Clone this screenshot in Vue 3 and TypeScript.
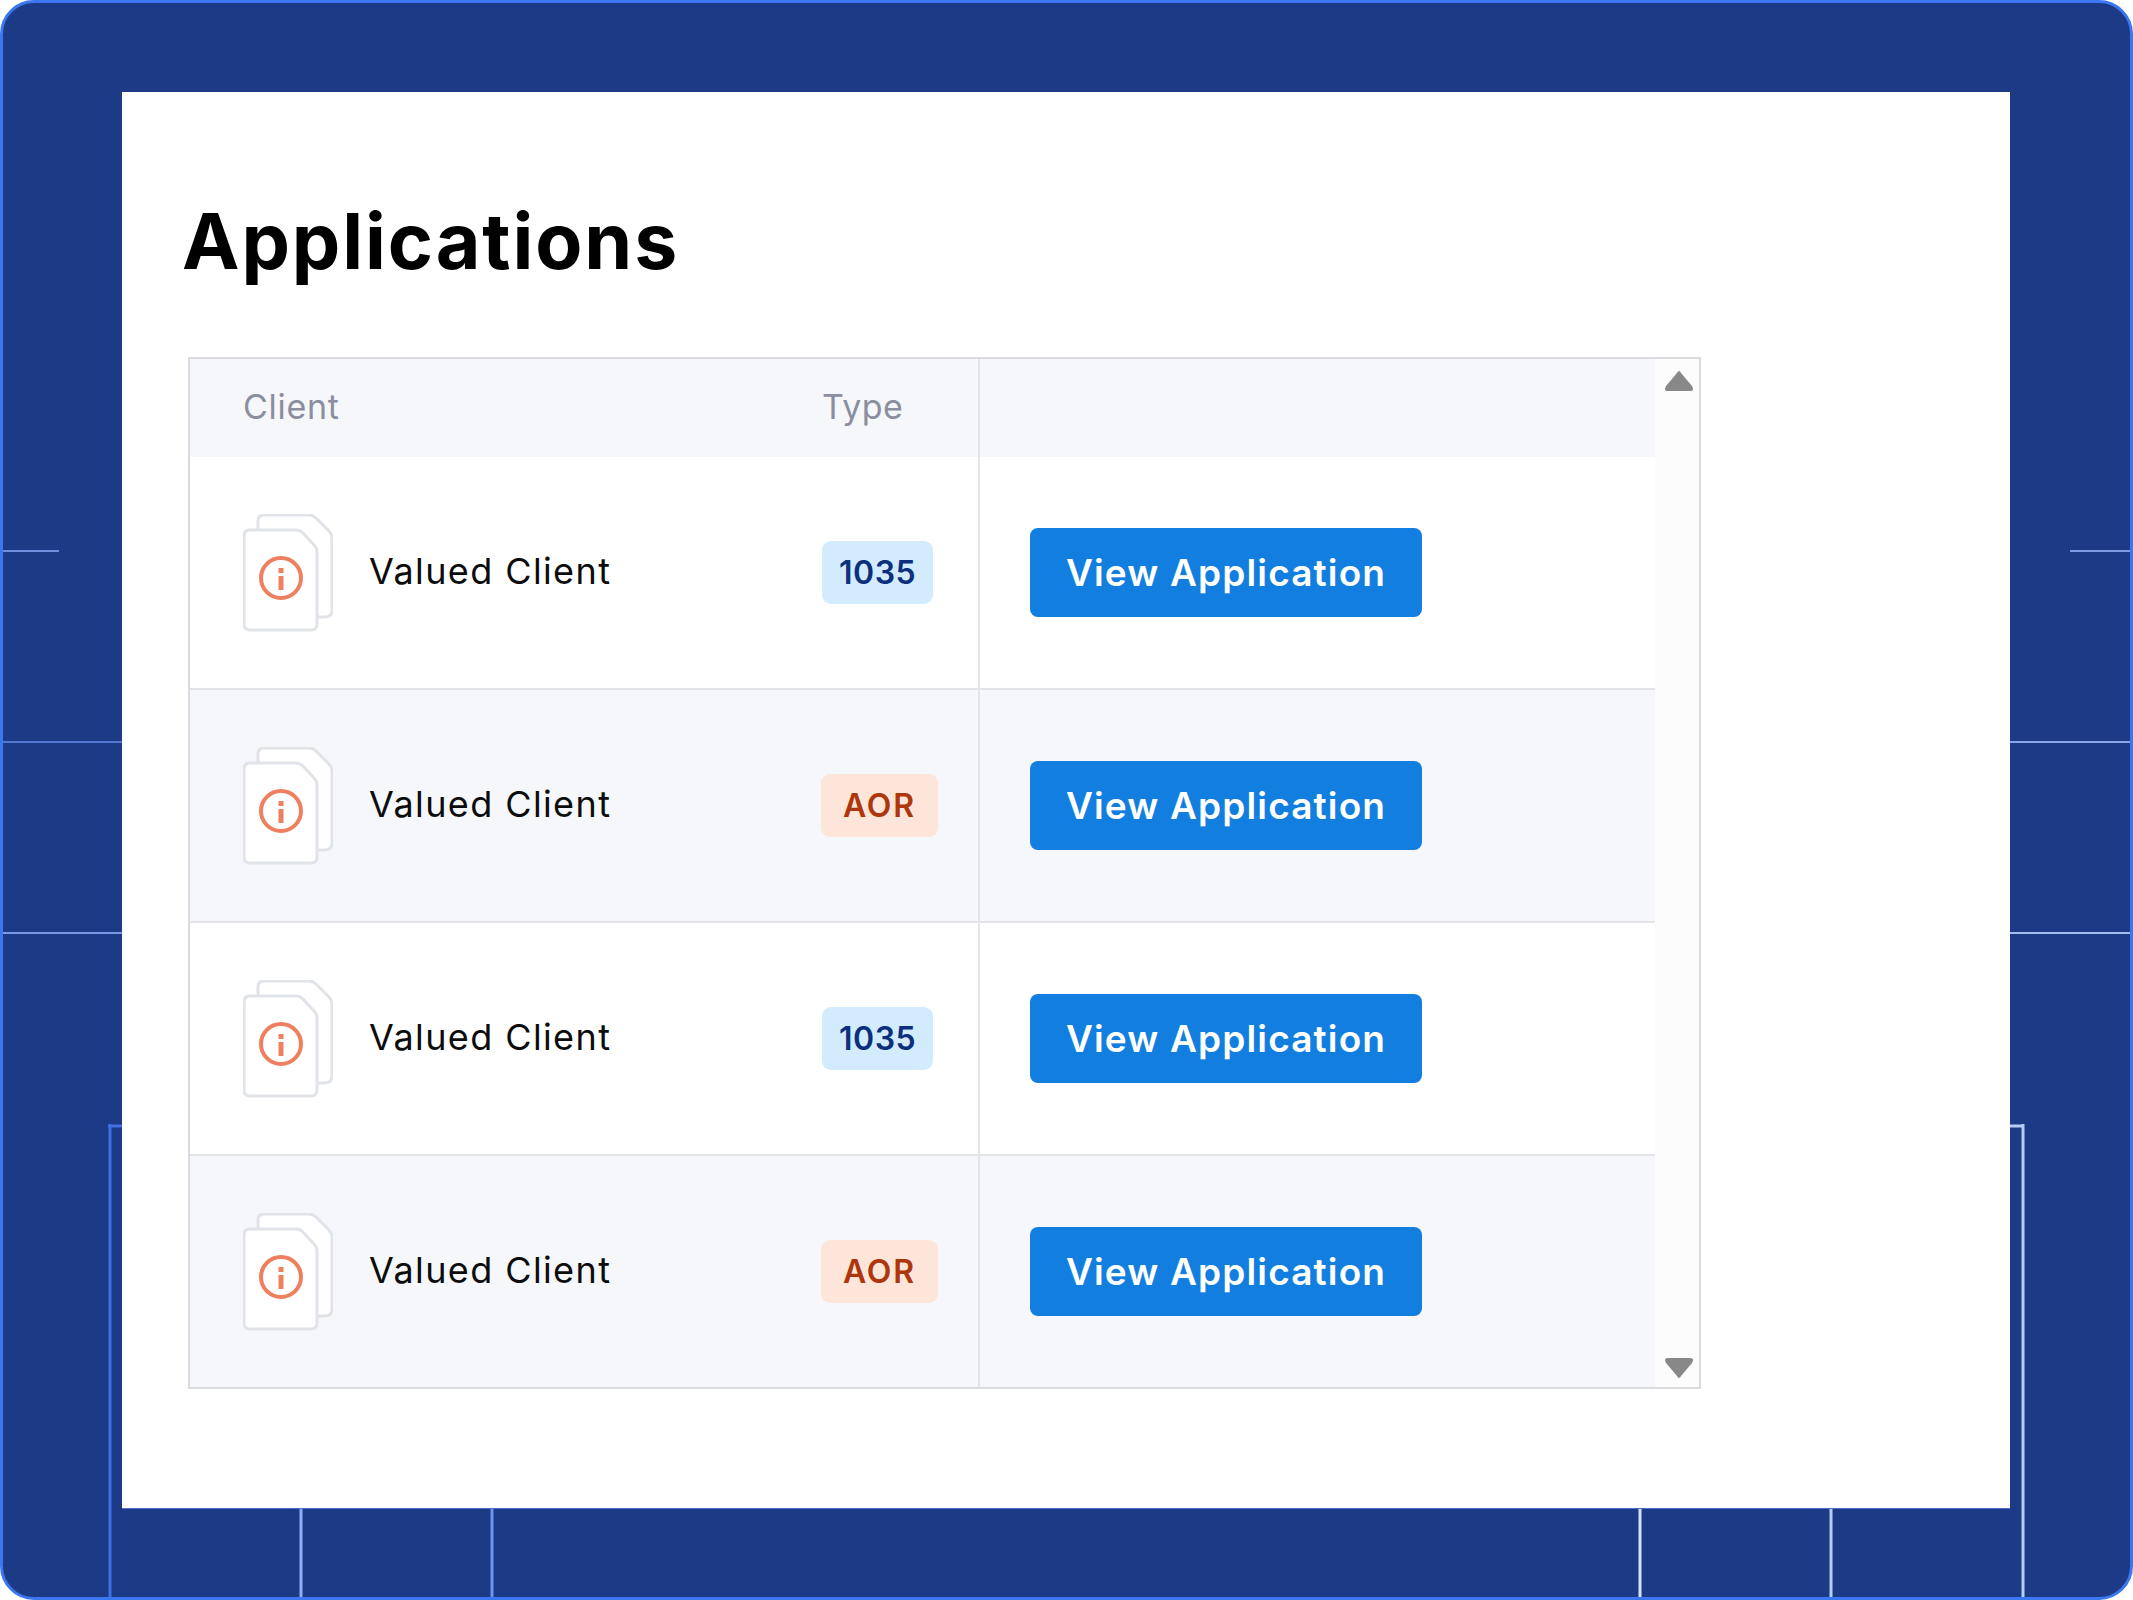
<script setup lang="ts">
interface Row { type: string; kind: string }
const rows: Row[] = [
  { type: '1035', kind: 'blue' },
  { type: 'AOR', kind: 'orange' },
  { type: '1035', kind: 'blue' },
  { type: 'AOR', kind: 'orange' },
]
interface Seg { x1: number; y1: number; x2: number; y2: number; c: string; w: number }
const segs: Seg[] = [
  { x1: 0, y1: 551, x2: 59, y2: 551, c: '#6f8ede', w: 2 },
  { x1: 2070, y1: 551, x2: 2133, y2: 551, c: '#7e9be3', w: 2 },
  { x1: 0, y1: 742, x2: 122, y2: 742, c: '#5477d2', w: 2 },
  { x1: 2010, y1: 742, x2: 2133, y2: 742, c: '#8aa6e8', w: 2 },
  { x1: 0, y1: 933, x2: 122, y2: 933, c: '#7b99e2', w: 2 },
  { x1: 2010, y1: 933, x2: 2133, y2: 933, c: '#a3bcf0', w: 2 },
  { x1: 110, y1: 1124, x2: 110, y2: 1600, c: '#3f6fe2', w: 3 },
  { x1: 108, y1: 1126, x2: 122, y2: 1126, c: '#3f6fe2', w: 3 },
  { x1: 301, y1: 1508, x2: 301, y2: 1600, c: '#8fb0f7', w: 3 },
  { x1: 492, y1: 1508, x2: 492, y2: 1600, c: '#6d95f0', w: 3 },
  { x1: 1640, y1: 1508, x2: 1640, y2: 1600, c: '#d3e2fb', w: 3 },
  { x1: 1831, y1: 1508, x2: 1831, y2: 1600, c: '#b4cdf9', w: 3 },
  { x1: 2023, y1: 1124, x2: 2023, y2: 1600, c: '#b4cdf9', w: 3 },
  { x1: 2010, y1: 1126, x2: 2024, y2: 1126, c: '#b4cdf9', w: 3 },
]
</script>

<template>
  <div class="frame">
    <svg class="lines" width="2133" height="1600" viewBox="0 0 2133 1600" aria-hidden="true">
      <line
        v-for="(s, i) in segs"
        :key="i"
        :x1="s.x1"
        :y1="s.y1"
        :x2="s.x2"
        :y2="s.y2"
        :stroke="s.c"
        :stroke-width="s.w"
      />
    </svg>
    <main class="card">
      <h1 class="title">Applications</h1>
      <section class="table">
        <div class="rows">
          <div class="row head">
            <div class="cell-left">
              <span class="head-client">Client</span>
              <span class="head-type">Type</span>
            </div>
            <div class="cell-right"></div>
          </div>
          <div v-for="(r, i) in rows" :key="i" class="row" :class="{ alt: i % 2 === 1 }">
            <div class="cell-left">
              <svg class="doc" width="90" height="118" viewBox="0 0 90 118" aria-hidden="true">
                <path
                  d="M15 7Q15 1 21 1H66Q70 1 73 4L85 16Q89 20 89 24V96Q89 103 82 103H15Z"
                  fill="#fff"
                  stroke="#e0e3e8"
                  stroke-width="3"
                />
                <path
                  d="M7 16H53Q57 16 60 19L71 31Q74 34 74 38V110Q74 116 68 116H7Q1 116 1 110V22Q1 16 7 16Z"
                  fill="#fff"
                  stroke="#e0e3e8"
                  stroke-width="3"
                />
                <circle cx="38" cy="64" r="20" fill="none" stroke="#ee7f5f" stroke-width="4" />
                <rect x="35.5" y="54" width="5" height="5" fill="#ee7f5f" />
                <rect x="35.5" y="62" width="5" height="14" fill="#ee7f5f" />
              </svg>
              <span class="name">Valued Client</span>
              <span class="badge" :class="r.kind">{{ r.type }}</span>
            </div>
            <div class="cell-right">
              <button class="view" type="button">View Application</button>
            </div>
          </div>
        </div>
        <aside class="gutter">
          <svg width="28" height="20" viewBox="0 0 28 20" aria-hidden="true">
            <path d="M14 0Q15 0 16 2L27 15Q28 17 28 18Q28 20 25 20H3Q0 20 0 18Q0 17 1 15L12 2Q13 0 14 0Z" fill="#888" />
          </svg>
          <svg width="28" height="20" viewBox="0 0 28 20" aria-hidden="true">
            <path d="M14 20Q15 20 16 18L27 5Q28 3 28 2Q28 0 25 0H3Q0 0 0 2Q0 3 1 5L12 18Q13 20 14 20Z" fill="#888" />
          </svg>
        </aside>
      </section>
    </main>
  </div>
</template>

<style>
html, body { margin: 0; background: #fff; }
</style>

<style scoped>
.frame {
  position: relative;
  box-sizing: border-box;
  width: 2133px;
  height: 1600px;
  padding: 89px 120px 0 119px;
  background: #1d3a87;
  border: 3px solid #3a78f2;
  border-radius: 34px;
  overflow: hidden;
  font-family: Inter, "Liberation Sans", sans-serif;
}
.lines {
  position: absolute;
  left: -3px;
  top: -3px;
}
.card {
  position: relative;
  box-sizing: border-box;
  width: 1888px;
  height: 1416px;
  padding: 102px 0 0 60px;
  background: #fff;
  box-shadow: 0 1px 0 #4c6fc8;
}
.title {
  margin: 0 0 68px;
  font-size: 77px;
  line-height: 95px;
  font-weight: 700;
  color: #000;
  letter-spacing: 1.9px;
}
.table {
  display: flex;
  box-sizing: border-box;
  width: 1513px;
  height: 1032px;
  margin-left: 6px;
  border: 2px solid #d9dbdf;
  overflow: hidden;
}
.rows {
  flex: 1;
  display: flex;
  flex-direction: column;
  min-height: 0;
}
.row {
  box-sizing: border-box;
  flex: none;
  display: grid;
  grid-template-columns: 790px 1fr;
  height: 233px;
  background: #fff;
  border-bottom: 2px solid #e2e4e8;
}
.row.alt { background: #f5f7fb; }
.row.head {
  height: 98px;
  background: #f5f7fb;
  border-bottom: 0;
}
.cell-left {
  display: grid;
  grid-template-columns: 127px 452px 1fr;
  align-items: center;
  box-sizing: border-box;
  padding-left: 53px;
  border-right: 2px solid #e3e5e9;
}
.cell-right {
  display: flex;
  align-items: center;
  padding-left: 50px;
}
.head-client,
.head-type {
  font-size: 34px;
  color: #8b8e9f;
  letter-spacing: 0.7px;
  transform: translateY(-2px);
}
.head-client { grid-column: 1 / 3; }
.head-type { grid-column: 3; letter-spacing: 0.4px; }
.name {
  margin-left: -1px;
  font-size: 36px;
  font-weight: 400;
  color: #0c0c0c;
  letter-spacing: 1.4px;
  transform: translateY(-2px);
}
.badge {
  justify-self: start;
  box-sizing: border-box;
  height: 63px;
  line-height: 63px;
  border-radius: 9px;
  font-size: 32px;
  font-weight: 600;
}
.badge.blue { padding: 0 17px; letter-spacing: 0.5px; background: #d3ecfd; color: #0c2f7e; }
.badge.orange { padding: 0 22px; margin-left: -1px; letter-spacing: 1.8px; background: #fde6d9; color: #ae360c; }
.view {
  box-sizing: border-box;
  width: 392px;
  height: 89px;
  padding: 0;
  border: 0;
  border-radius: 8px;
  background: #127fe0;
  color: #fff;
  font-family: inherit;
  font-size: 37px;
  font-weight: 600;
  letter-spacing: 1.15px;
}
.gutter {
  width: 44px;
  box-sizing: border-box;
  padding: 12px 6px 9px 10px;
  background: #fcfcfc;
  display: flex;
  flex-direction: column;
  justify-content: space-between;
}
.gutter svg { display: block; }
</style>
